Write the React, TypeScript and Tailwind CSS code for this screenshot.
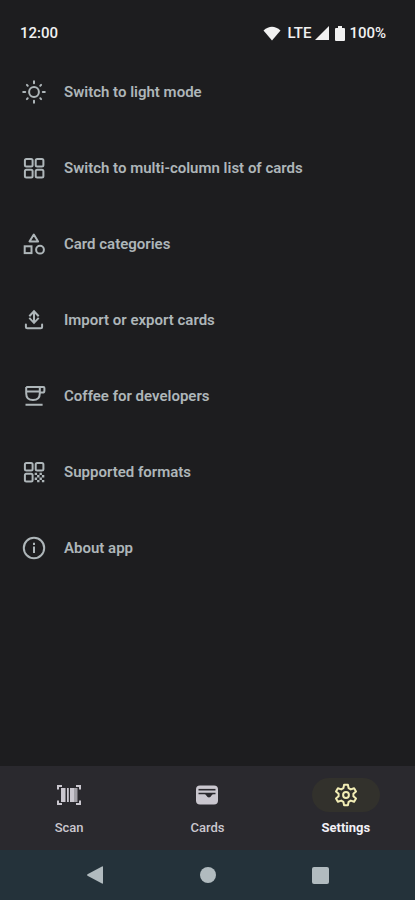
import type { ReactNode } from "react";
import clsx from "clsx";

interface IconProps {
  children: ReactNode;
  className?: string;
}

function Icon({ children, className }: IconProps) {
  return (
    <svg
      viewBox="0 0 24 24"
      fill="none"
      stroke="currentColor"
      strokeWidth="2"
      className={clsx("size-6 shrink-0", className)}
      aria-hidden="true"
    >
      {children}
    </svg>
  );
}

const menuItems = [
  {
    label: "Switch to light mode",
    icon: (
      <Icon>
        <circle cx="12" cy="12" r="4.9" />
        <path
          strokeLinecap="round"
          d="M12 1.2v2M12 20.8v2M1.2 12h2M20.8 12h2M4.900 4.900l.8.8M18.300 18.300l.8.8M4.900 19.100l.8-.8M18.300 5.700l.8-.8"
        />
      </Icon>
    ),
  },
  {
    label: "Switch to multi-column list of cards",
    icon: (
      <Icon>
        <rect x="2.900" y="2.900" width="7.700" height="7.700" rx="1.500" />
        <rect x="13.700" y="2.900" width="7.700" height="7.700" rx="1.500" />
        <rect x="2.900" y="13.700" width="7.700" height="7.700" rx="1.500" />
        <rect x="13.700" y="13.700" width="7.700" height="7.700" rx="1.500" />
      </Icon>
    ),
  },
  {
    label: "Card categories",
    icon: (
      <Icon>
        <path strokeLinejoin="round" d="M11.800 2.500 7.500 9.500h8.600z" />
        <rect x="2.700" y="14.300" width="6.800" height="6.800" />
        <circle cx="18" cy="17.700" r="3.900" />
      </Icon>
    ),
  },
  {
    label: "Import or export cards",
    icon: (
      <Icon>
        <path
          strokeLinejoin="round"
          strokeLinecap="round"
          d="M3.900 16.500v2.200q0 1.500 1.500 1.500h13.200q1.500 0 1.500-1.500v-2.200"
        />
        <path d="M12 4v10.500M7.300 8.300 12 3.200l4.700 5.100M7.300 9.900l4.700 5 4.700-5" />
      </Icon>
    ),
  },
  {
    label: "Coffee for developers",
    icon: (
      <Icon>
        <path d="M4.200 2.900h17.200q1 0 1 1v2.800q0 1.900-2 1.900h-2.600M4.200 2.900v6.600q0 6.500 6.800 6.500t6.800-6.500V2.900M4.200 7.500h13.600M3.500 20.800h17.100" />
      </Icon>
    ),
  },
  {
    label: "Supported formats",
    icon: (
      <Icon>
        <rect x="2.900" y="2.900" width="7.700" height="7.700" rx="1.500" />
        <rect x="13.700" y="2.900" width="7.700" height="7.700" rx="1.500" />
        <rect x="2.900" y="13.700" width="7.700" height="7.700" rx="1.500" />
        <path
          stroke="none"
          fill="currentColor"
          d="M12.700 12.700h2.400v2.400h-2.400zM17.500 12.700h2.400v2.400h-2.400zM15.100 15.100h2.400v2.400h-2.400zM19.900 15.100h2.400v2.400h-2.400zM12.700 17.500h2.400v2.400h-2.400zM17.500 17.500h2.400v2.400h-2.400zM15.100 19.900h2.400v2.400h-2.400zM19.900 19.900h2.400v2.400h-2.400z"
        />
      </Icon>
    ),
  },
  {
    label: "About app",
    icon: (
      <Icon>
        <circle cx="12" cy="12" r="10.200" />
        <path d="M12 10.500v6.500M12 6.800v2.200" />
      </Icon>
    ),
  },
];

const tabs = [
  {
    label: "Scan",
    icon: (
      <Icon>
        <path d="M1 6.500V3h4M19 3h4v3.500M1 17.500V21h4M19 21h4v-3.500" />
        <g stroke="none" fill="currentColor">
          <path d="M4 5h4.500v14H4zM10 5h1.800v14H10z" />
          <path d="M13 5h4v14h-4z" />
          <path opacity=".75" d="M17 5h3.500v14H17z" />
        </g>
      </Icon>
    ),
  },
  {
    label: "Cards",
    icon: (
      <Icon>
        <rect x="1" y="2.500" width="22" height="19" rx="4" fill="currentColor" stroke="none" />
        <path stroke="#2a292e" strokeWidth="1.600" d="M3.500 6.700h17" />
        <path
          stroke="none"
          fill="#2a292e"
          d="M3.500 9.800h17v1.400h-2q-1.200 0-2 1.400-1.100 2-2.500 2-1.600 0-2.700-2-.8-1.400-1.800-1.400h-6z"
        />
      </Icon>
    ),
  },
  {
    label: "Settings",
    active: true,
    icon: (
      <Icon>
        <path
          strokeLinejoin="round"
          d="M10.100 1.700h3.800l.7 3.400 2.200 1.300 3.300-1.200 1.900 3.300-2.600 2.300v2.400l2.600 2.300-1.900 3.300-3.300-1.200-2.200 1.300-.7 3.400h-3.800l-.7-3.400-2.200-1.300-3.300 1.200L2 15.500l2.600-2.300v-2.400L2 8.500l1.900-3.300 3.300 1.200 2.200-1.300z"
        />
        <circle cx="12" cy="12" r="2.900" />
      </Icon>
    ),
  },
];

function StatusBar() {
  return (
    <header className="flex h-[54px] items-center justify-between pt-3 pr-[29px] pl-5 text-[15px] text-[#f1f1f1]">
      <span>12:00</span>
      <div className="flex items-center gap-1">
        <svg viewBox="0 0 18 15" className="h-[15px] w-[18px]" fill="currentColor" aria-hidden="true">
          <path d="M.5 4.500Q9-3 17.500 4.500L9 14.500z" />
        </svg>
        <span className="ml-0.5">LTE</span>
        <svg viewBox="0 0 14 14" className="size-3.5" fill="currentColor" aria-hidden="true">
          <path d="M14 0v14H0z" />
        </svg>
        <svg viewBox="0 0 10 15" className="ml-0.5 h-[15px] w-[10px]" fill="currentColor" aria-hidden="true">
          <path d="M3 0h4v2h2q1 0 1 1v11q0 1-1 1H1q-1 0-1-1V3q0-1 1-1h2z" />
        </svg>
        <span>100%</span>
      </div>
    </header>
  );
}

function SystemBar() {
  return (
    <div className="grid h-[50px] grid-cols-3 place-items-center bg-[#24323a] px-[38px] text-[#b1bbbf]">
      <button type="button" aria-label="Back">
        <svg viewBox="0 0 18 18" className="size-[18px]" fill="currentColor">
          <path d="M17 1v16q0 1-1 .5L1.500 9.700q-1-.7 0-1.400L16 .5q1-.5 1 .5z" />
        </svg>
      </button>
      <button type="button" aria-label="Home" className="size-4 rounded-full bg-current" />
      <button type="button" aria-label="Recent apps" className="size-[17px] rounded-xs bg-current" />
    </div>
  );
}

export default function App() {
  return (
    <div className="flex min-h-screen flex-col bg-[#1d1d1f] font-[Roboto,sans-serif] font-medium">
      <StatusBar />
      <main className="flex-1">
        <ul>
          {menuItems.map((item) => (
            <li key={item.label}>
              <button
                type="button"
                className="flex h-[76px] w-full items-center gap-[18px] px-[22px] text-left text-[15px] font-semibold text-[#aeb6b9]"
              >
                {item.icon}
                {item.label}
              </button>
            </li>
          ))}
        </ul>
      </main>
      <nav className="grid h-[84px] grid-cols-3 bg-[#2a292e]">
        {tabs.map((tab) => (
          <button
            key={tab.label}
            type="button"
            aria-current={tab.active ? "page" : undefined}
            className={clsx(
              "flex flex-col items-center gap-2 pt-3 text-[13px] leading-4",
              tab.active ? "font-bold text-[#f3f1f6]" : "text-[#cac7cf]"
            )}
          >
            <span
              className={clsx(
                "flex h-[34px] w-[68px] items-center justify-center rounded-full",
                tab.active && "bg-[#32312c] text-[#f2edb5]"
              )}
            >
              {tab.icon}
            </span>
            {tab.label}
          </button>
        ))}
      </nav>
      <SystemBar />
    </div>
  );
}
